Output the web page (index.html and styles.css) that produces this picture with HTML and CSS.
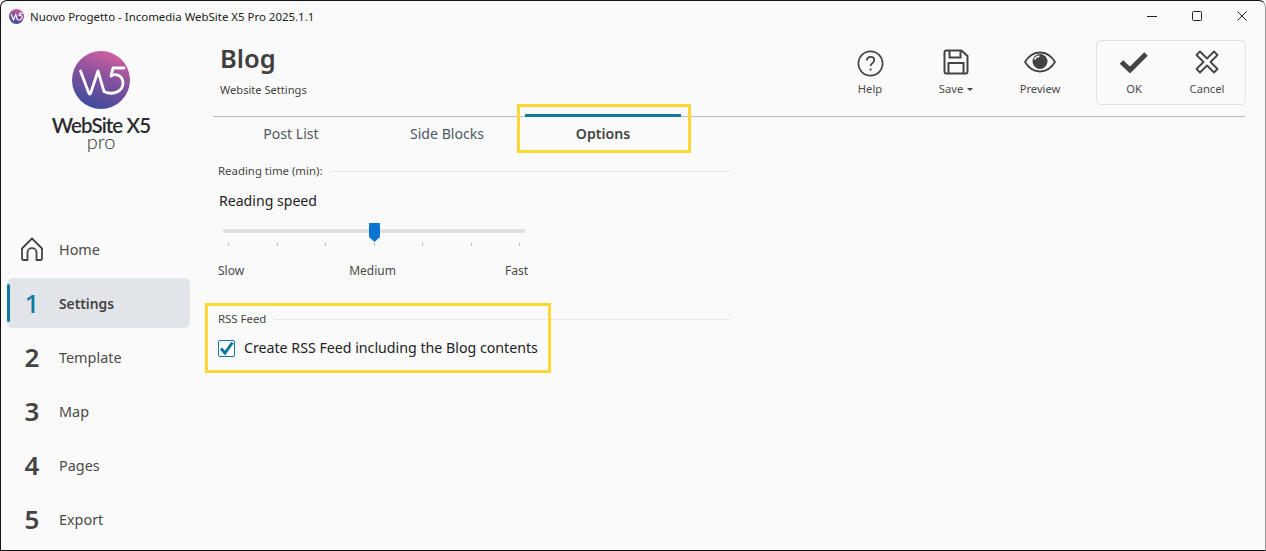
FILE: index.html
```html
<!DOCTYPE html>
<html lang="en">
<head>
<meta charset="utf-8">
<title>Nuovo Progetto - Incomedia WebSite X5 Pro 2025.1.1</title>
<link rel="stylesheet" href="styles.css">
</head>
<body>
<svg class="defs" width="0" height="0" aria-hidden="true">
  <defs>
    <linearGradient id="lg" x1="0.7" y1="0" x2="0.35" y2="1">
      <stop offset="0" stop-color="#d5619f"/>
      <stop offset="0.5" stop-color="#80509f"/>
      <stop offset="1" stop-color="#3d4b9c"/>
    </linearGradient>
  </defs>
</svg>
<div class="window">
  <header class="titlebar">
    <div class="title-left">
      <svg class="app-icon" viewBox="0 0 58 58"><circle cx="29" cy="29" r="29" fill="url(#lg)"/><path d="M8.500 20 17.500 43 26 20l6 21c8 4 19 0 19-9 0-7-7-10-12-7l2-8h11" fill="none" stroke="#fff" stroke-width="4.500" stroke-linejoin="round"/></svg>
      <span class="title-text">Nuovo Progetto - Incomedia WebSite X5 Pro 2025.1.1</span>
    </div>
    <div class="win-controls">
      <svg viewBox="0 0 12 12"><path d="M1 6.500h10" stroke="#222" stroke-width="1"/></svg>
      <svg viewBox="0 0 12 12"><rect x="1.500" y="1.500" width="9" height="9" rx="1.200" fill="none" stroke="#222"/></svg>
      <svg viewBox="0 0 12 12"><path d="M1.500 1.500l9 9M10.500 1.500l-9 9" stroke="#222"/></svg>
    </div>
  </header>

  <div class="body">
    <aside class="sidebar">
      <div class="logo">
        <svg class="logo-mark" viewBox="0 0 58 58"><circle cx="29" cy="29" r="29" fill="url(#lg)"/><path d="M8.500 20 16.800 42c.5 1.300 1.400 1.300 1.900 0L26 20l6 20.500c8 4 19 .5 19-8.500 0-7.500-7.500-10-12-7l2-8h11" fill="none" stroke="#fff" stroke-width="2.800" stroke-linecap="round" stroke-linejoin="round"/></svg>
        <div class="logo-name">WebSite X5</div>
        <div class="logo-pro">pro</div>
      </div>
      <nav class="nav">
        <a class="nav-item">
          <span class="nav-mark">
            <svg class="home-icon" viewBox="0 0 24 24"><path d="M2 11.500 12 1.500l10 10v9.800c0 1-.6 1.700-1.700 1.700h-3.800v-7.500c0-2.500-2-4.300-4.500-4.300s-4.500 1.800-4.500 4.300V23H3.700C2.600 23 2 22.300 2 21.300z" fill="none" stroke="#444" stroke-width="1.800" stroke-linejoin="round"/></svg>
          </span>
          <span>Home</span>
        </a>
        <a class="nav-item active"><span class="nav-mark">1</span><span>Settings</span></a>
        <a class="nav-item"><span class="nav-mark">2</span><span>Template</span></a>
        <a class="nav-item"><span class="nav-mark">3</span><span>Map</span></a>
        <a class="nav-item"><span class="nav-mark">4</span><span>Pages</span></a>
        <a class="nav-item"><span class="nav-mark">5</span><span>Export</span></a>
      </nav>
    </aside>

    <main class="content">
      <div class="head">
        <div class="heading">
          <h1>Blog</h1>
          <p>Website Settings</p>
        </div>
        <div class="toolbar">
          <button class="tool tool-help">
            <svg viewBox="0 0 28 28"><circle cx="14" cy="14" r="12.500" fill="none" stroke="#444" stroke-width="1.800"/><path d="M10.200 11c0-2.400 1.700-3.800 3.900-3.800s3.800 1.400 3.800 3.400c0 3-3.800 3-3.800 6" fill="none" stroke="#444" stroke-width="1.800"/><circle cx="14.100" cy="20.300" r="1.200" fill="#444"/></svg>
            <span>Help</span>
          </button>
          <button class="tool tool-save">
            <svg viewBox="0 0 26 26"><path d="M1.500 3.500c0-1.200.8-2 2-2h15l6 5.500v15.500c0 1.200-.8 2-2 2h-19c-1.200 0-2-.8-2-2z" fill="none" stroke="#444" stroke-width="2"/><path d="M6.500 2v6.500h11V2M5.500 24.500V14h15v10.500" fill="none" stroke="#444" stroke-width="2"/></svg>
            <span>Save <i class="caret"></i></span>
          </button>
          <button class="tool tool-preview">
            <svg class="eye" viewBox="0 0 32 22"><path d="M1 11C5 4.500 10 1.500 16 1.500S27 4.500 31 11c-4 6.500-9 9.500-15 9.500S5 17.500 1 11z" fill="none" stroke="#444" stroke-width="1.800"/><circle cx="16" cy="10.500" r="7.500" fill="#444"/><path d="M10.500 8.500c1-2.200 3-3.300 5-3.300" fill="none" stroke="#fafafa" stroke-width="1.500"/></svg>
            <span>Preview</span>
          </button>
          <div class="confirm">
            <button class="tool tool-ok">
              <svg viewBox="0 0 28 22"><path d="M1.500 11 10 19 26 3" fill="none" stroke="#444" stroke-width="5"/></svg>
              <span>OK</span>
            </button>
            <button class="tool tool-cancel">
              <svg viewBox="0 0 24 24"><path d="M5 1.500 12 8.500l7-7 3.500 3.500-7 7 7 7-3.500 3.500-7-7-7 7-3.500-3.500 7-7-7-7z" fill="none" stroke="#444" stroke-width="1.800" stroke-linejoin="round"/></svg>
              <span>Cancel</span>
            </button>
          </div>
        </div>
      </div>

      <div class="tabs">
        <div class="tab">Post List</div>
        <div class="tab">Side Blocks</div>
        <div class="tab selected">Options</div>
      </div>

      <section class="panel">
        <div class="group-title"><span>Reading time (min):</span><i></i></div>
        <div class="field-label">Reading speed</div>
        <div class="slider">
          <div class="track"></div>
          <svg class="thumb" viewBox="0 0 11 19"><path d="M0 1c0-.6.4-1 1-1h9c.6 0 1 .4 1 1v13l-5.500 5L0 14z" fill="#0a74d0"/></svg>
          <div class="ticks"><i></i><i></i><i></i><i></i><i></i><i></i><i></i></div>
        </div>
        <div class="scale"><span>Slow</span><span class="mid">Medium</span><span>Fast</span></div>

        <div class="group-title rss"><span>RSS Feed</span><i></i></div>
        <label class="check">
          <svg class="box" viewBox="0 0 17 17"><rect x=".5" y=".5" width="16" height="16" rx="1.500" fill="#fff" stroke="#10799f"/><path d="M3 8.500 7 13l7.500-10.500" fill="none" stroke="#10799f" stroke-width="3"/></svg>
          <span>Create RSS Feed including the Blog contents</span>
        </label>
      </section>
    </main>
  </div>
  <div class="hl hl-tab"></div>
  <div class="hl hl-rss"></div>
</div>
</body>
</html>
```
FILE: styles.css
```css
* { box-sizing: border-box; }
html, body { margin: 0; padding: 0; background: #fafafa; overflow: hidden; }
.defs { position: absolute; }
.window {
  position: relative;
  width: 1266px;
  height: 551px;
  background: #fafafa;
  border: 1px solid #111;
  border-right-color: #999;
  border-radius: 7px 7px 0 0;
  font-family: "Noto Sans", "Open Sans", sans-serif;
  color: #444;
  overflow: hidden;
}
.titlebar { display: flex; justify-content: space-between; align-items: center; height: 30px; padding-left: 8px; }
.title-left { display: flex; align-items: center; gap: 6px; }
.app-icon { width: 15px; height: 15px; }
.title-text { font-size: 11.450px; color: #222; }
.win-controls { display: flex; gap: 33px; padding-right: 17px; }
.win-controls svg { width: 12px; height: 12px; }

.body { display: flex; }
.sidebar { width: 189px; flex: none; margin-left: 6px; padding-right: 6px; }
.logo { display: flex; flex-direction: column; align-items: center; padding-top: 20px; height: 193px; width: 188px; }
.logo-mark { width: 58px; height: 58px; }
.logo-name { font-family: "Lato", sans-serif; font-size: 20.500px; line-height: 18px; margin-top: 7px; color: #2c2c30; font-weight: 600; letter-spacing: -.9px; }
.logo-pro { font-family: "Lato", sans-serif; font-size: 20px; line-height: 14px; color: #333; font-weight: 300; }

.nav { display: flex; flex-direction: column; gap: 4px; }
.nav-item { display: flex; align-items: center; height: 50px; border-radius: 6px; font-size: 14.400px; color: #4a4a4a; position: relative; }
.nav-mark { width: 52px; font-size: 26px; font-weight: 600; color: #444; padding-right: 2px; display: flex; justify-content: center; line-height: 1; }
.home-icon { width: 24px; height: 24px; }
.active { background: #e1e5e9; font-weight: 600; font-size: 13.800px; color: #444; }
.active .nav-mark { color: #10799f; font-weight: 500; }
.active::before { content: ""; position: absolute; left: 0; top: 6px; bottom: 6px; width: 3px; background: #10799f; border-radius: 2px; }

.content { flex: 1; padding-left: 17px; padding-right: 19px; min-width: 0; }
.head { display: flex; justify-content: space-between; height: 85px; }
.heading { padding-left: 7px; }
h1 { margin: 0; font-size: 25.500px; line-height: 30px; font-weight: 600; color: #404040; padding-top: 12px; height: 42px; }
.heading p { margin: 9px 0 0; font-size: 11.100px; line-height: 16px; color: #444; }
.toolbar { display: flex; align-items: flex-start; padding-top: 9px; }
.tool { border: 0; background: none; padding: 0; display: flex; flex-direction: column; align-items: center; font: inherit; font-size: 11.200px; color: #4a4a4a; height: 64px; }
.tool svg { height: 27px; margin-top: 10px; display: block; }
.tool span { margin-top: 4px; line-height: 16px; }
.tool-help { width: 60px; margin-right: 26px; }
.tool-help svg { width: 27px; }
.tool-save { width: 60px; margin-right: 24px; }
.tool-save svg { width: 26px; height: 26px; margin-top: 9px; margin-bottom: 2px; }
.tool-preview { width: 60px; margin-right: 26px; }
.tool-preview svg { width: 32px; height: 24px; margin-top: 10px; margin-bottom: 3px; }
.caret { display: inline-block; border: 3px solid transparent; border-top-color: #444; border-bottom: 0; vertical-align: 2px; margin-left: 1px; }
.confirm { display: flex; width: 150px; height: 65px; border: 1px solid #e2e2e2; border-radius: 5px; padding-left: 7px; }
.tool-ok { width: 60px; margin-right: 13px; }
.tool-ok svg { width: 28px; height: 22px; margin-top: 10px; margin-bottom: 4px; }
.tool-cancel { width: 60px; }
.tool-cancel svg { width: 24px; height: 24px; margin-top: 9px; margin-bottom: 3px; }

.tabs { display: flex; border-top: 1px solid #bdbdbd; height: 38px; margin-right: 1px; }
.tab { width: 156px; text-align: center; font-size: 14.100px; line-height: 34px; color: #4f5860; position: relative; }
.selected { font-weight: 600; color: #444; }
.selected::before { content: ""; position: absolute; left: 0; right: 0; top: -3px; height: 3px; background: #10799f; }

.panel { width: 517px; padding-left: 5px; padding-top: 9px; }
.group-title { display: flex; align-items: center; gap: 8px; font-size: 11.400px; line-height: 16px; color: #444; height: 16px; }
.group-title i { flex: 1; border-top: 1px solid #e6e6e6; }
.field-label { margin-top: 12px; font-size: 14.100px; line-height: 20px; color: #222; padding-left: 1px; }
.slider { position: relative; height: 30px; width: 302px; margin-left: 5px; margin-top: 12px; }
.track { position: absolute; left: 0; right: 0; top: 6px; height: 4px; background: #dedede; border: 1px solid #e2e2e2; }
.thumb { position: absolute; left: 146px; top: 0; width: 11px; height: 19px; z-index: 1; }
.ticks { position: absolute; left: 5px; right: 5px; top: 20px; display: flex; justify-content: space-between; }
.ticks i { width: 1px; height: 3px; background: #bbb; }
.scale { display: flex; justify-content: space-between; width: 310px; font-size: 12px; line-height: 16px; color: #4a4a4a; margin-top: 10px; }
.mid { margin-right: 4px; }
.rss { margin-top: 32px; }
.check { display: flex; align-items: center; gap: 9px; margin-top: 11px; font-size: 14.200px; line-height: 20px; color: #222; }
.box { width: 17px; height: 17px; }

.hl { position: absolute; border: 3px solid #fdd835; pointer-events: none; }
.hl-tab { left: 516px; top: 103px; width: 174px; height: 49px; }
.hl-rss { left: 204px; top: 302px; width: 346px; height: 70px; }
```
